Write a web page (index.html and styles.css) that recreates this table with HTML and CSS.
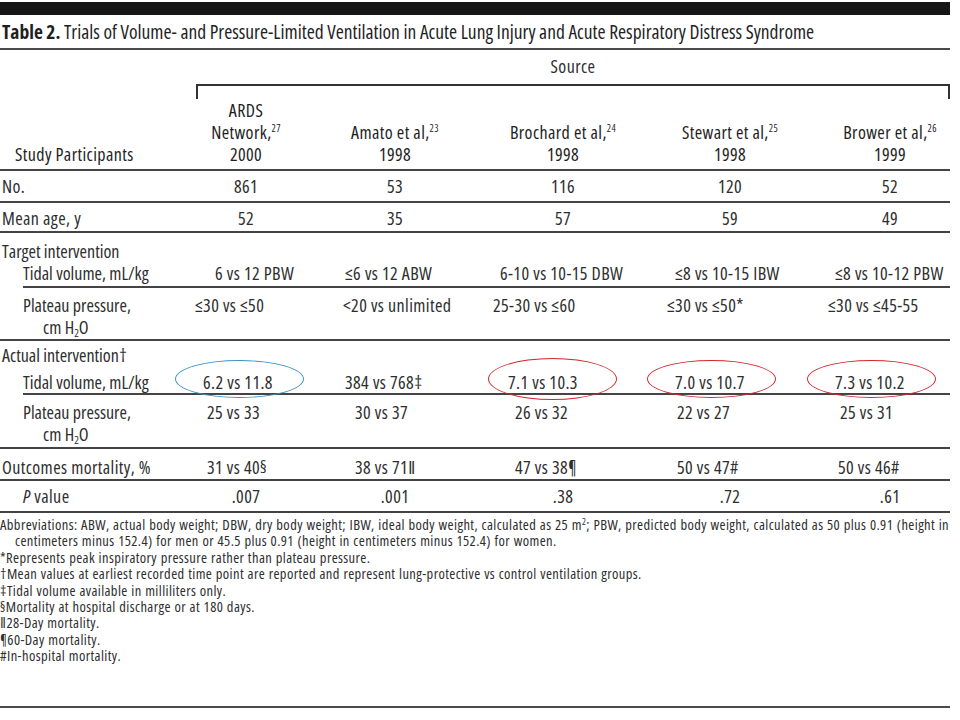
FILE: index.html
```html
<!DOCTYPE html>
<html lang="en">
<head>
<meta charset="utf-8">
<title>Table 2</title>
<link rel="stylesheet" href="styles.css">
</head>
<body>
<div class="page">
  <div class="bar"></div>
  <div class="title"><b>Table 2.</b> Trials of Volume- and Pressure-Limited Ventilation in Acute Lung Injury and Acute Respiratory Distress Syndrome</div>

  <div class="spanner">
    <div class="source">Source</div>
    <div class="bracket"></div>
  </div>

  <div class="row head">
    <div class="lab">Study Participants</div>
    <div>ARDS<br>Network,<sup>27</sup><br>2000</div>
    <div>Amato et al,<sup>23</sup><br>1998</div>
    <div>Brochard et al,<sup>24</sup><br>1998</div>
    <div>Stewart et al,<sup>25</sup><br>1998</div>
    <div class="last">Brower et al,<sup>26</sup><br>1999</div>
  </div>

  <div class="row cen r-no">
    <div class="lab">No.</div>
    <div>861</div><div>53</div><div>116</div><div>120</div><div class="last">52</div>
  </div>

  <div class="row cen r-age">
    <div class="lab">Mean age, y</div>
    <div>52</div><div>35</div><div>57</div><div>59</div><div class="last">49</div>
  </div>

  <div class="group g-target">
    <div class="glabel">Target intervention</div>
    <div class="row sub r-tt">
      <div class="lab">Tidal volume, mL/kg</div>
      <div>6 vs 12 PBW</div><div>≤6 vs 12 ABW</div><div>6-10 vs 10-15 DBW</div><div>≤8 vs 10-15 IBW</div><div>≤8 vs 10-12 PBW</div>
    </div>
    <div class="row sub end r-tp">
      <div class="lab">Plateau pressure,<br><span class="unit">cm H<sub>2</sub>O</span></div>
      <div>≤30 vs ≤50</div><div>&lt;20 vs unlimited</div><div>25-30 vs ≤60</div><div>≤30 vs ≤50*</div><div>≤30 vs ≤45-55</div>
    </div>
  </div>

  <div class="group g-actual">
    <div class="glabel">Actual intervention†</div>
    <div class="row sub r-at">
      <div class="lab">Tidal volume, mL/kg</div>
      <div><span class="ring blue">6.2 vs 11.8</span></div>
      <div>384 vs 768‡</div>
      <div><span class="ring red wide">7.1 vs 10.3</span></div>
      <div><span class="ring red">7.0 vs 10.7</span></div>
      <div><span class="ring red">7.3 vs 10.2</span></div>
    </div>
    <div class="row sub end r-ap">
      <div class="lab">Plateau pressure,<br><span class="unit">cm H<sub>2</sub>O</span></div>
      <div>25 vs 33</div><div>30 vs 37</div><div>26 vs 32</div><div>22 vs 27</div><div>25 vs 31</div>
    </div>
  </div>

  <div class="row r-out">
    <div class="lab">Outcomes mortality, %</div>
    <div>31 vs 40§</div><div>38 vs 71‖</div><div>47 vs 38¶</div><div>50 vs 47#</div><div>50 vs 46#</div>
  </div>

  <div class="row cen r-p">
    <div class="lab"><i>P</i> value</div>
    <div>.007</div><div>.001</div><div>.38</div><div>.72</div><div class="last">.61</div>
  </div>

  <div class="notes">
    <p class="hang">Abbreviations: ABW, actual body weight; DBW, dry body weight; IBW, ideal body weight, calculated as 25 m<sup>2</sup>; PBW, predicted body weight, calculated as 50 plus 0.91 (height in<br>centimeters minus 152.4) for men or 45.5 plus 0.91 (height in centimeters minus 152.4) for women.</p>
    <p>*Represents peak inspiratory pressure rather than plateau pressure.</p>
    <p>†Mean values at earliest recorded time point are reported and represent lung-protective vs control ventilation groups.</p>
    <p>‡Tidal volume available in milliliters only.</p>
    <p>§Mortality at hospital discharge or at 180 days.</p>
    <p>‖28-Day mortality.</p>
    <p>¶60-Day mortality.</p>
    <p>#In-hospital mortality.</p>
  </div>
</div>
</body>
</html>
```

FILE: styles.css
```css
html, body {
  margin: 0;
  padding: 0;
  background: #ffffff;
}

body {
  color: #2e2e2e;
  font-family: "Open Sans", "Liberation Sans", Arial, sans-serif;
  font-stretch: condensed;
}

.page {
  width: 950px;
}

.bar {
  height: 13px;
  margin-top: 2px;
  background: #161616;
}

.title {
  height: 33px;
  line-height: 33px;
  padding-left: 2px;
  font-size: 19.5px;
  color: #1f1f1f;
  white-space: nowrap;
  border-bottom: 2px solid #4a4a4a;
}

.title b {
  font-weight: 700;
}

.spanner {
  margin-left: 196px;
}

.source {
  text-align: center;
  font-size: 18px;
  line-height: 22px;
  letter-spacing: 0.4px;
  padding-top: 5px;
}

.bracket {
  box-sizing: border-box;
  margin-top: 7px;
  height: 15px;
  border: 2px solid #333333;
  border-bottom: none;
}

.row {
  display: grid;
  grid-template-columns: 172px 148px 150px 186px 148px 146px;
  font-size: 18px;
  line-height: 22px;
  letter-spacing: 0.4px;
  border-bottom: 2px solid #444444;
}

.row.sub {
  margin-left: 23px;
  grid-template-columns: 149px 148px 150px 186px 148px 146px;
}

.row.sub.end {
  border-bottom: none;
}

.row > div {
  white-space: nowrap;
}

.lab {
  padding-left: 2px;
  text-align: left;
}

.row.sub .lab {
  padding-left: 0;
  letter-spacing: 0;
}

.unit {
  padding-left: 20px;
}

sub {
  font-size: 11px;
  line-height: 0;
  vertical-align: -3px;
}

sup {
  font-size: 10px;
  line-height: 0;
  vertical-align: 7px;
}

/* header */
.head {
  align-items: end;
  text-align: center;
  padding-bottom: 4px;
  color: #1e1e1e;
}

.head .lab {
  padding-left: 15px;
}

.head .last,
.cen .last {
  padding-left: 26px;
}

.cen {
  text-align: center;
}

.cen .lab {
  text-align: left;
}

.r-no {
  padding: 4px 0 4px;
}

.r-age {
  padding: 4px 0 2px;
}

.r-p {
  padding: 4px 0 4px;
}

.r-p .lab {
  padding-left: 23px;
}

.r-out {
  padding: 7px 0 1px;
}

/* groups */
.group {
  border-bottom: 2px solid #444444;
}

.glabel {
  font-size: 18px;
  line-height: 22px;
  padding-left: 2px;
}

.g-target {
  padding: 7px 0 1px;
}

.g-target .r-tt {
  padding-bottom: 2px;
}

.g-target .r-tp {
  padding-top: 6px;
}

.g-actual {
  padding: 3px 0 2px;
}

.g-actual .r-at {
  margin-top: 5px;
}

.g-actual .r-ap {
  padding-top: 6px;
}

/* per-column starting offsets of left-set values */
.r-tt > :nth-child(2) { padding-left: 43px; }
.r-tt > :nth-child(3) { padding-left: 25px; }
.r-tt > :nth-child(4) { padding-left: 30px; }
.r-tt > :nth-child(5) { padding-left: 19px; }
.r-tt > :nth-child(6) { padding-left: 31px; }

.r-tp > :nth-child(2) { padding-left: 23px; }
.r-tp > :nth-child(3) { padding-left: 23px; }
.r-tp > :nth-child(4) { padding-left: 23px; }
.r-tp > :nth-child(5) { padding-left: 11px; }
.r-tp > :nth-child(6) { padding-left: 24px; }

.r-at > :nth-child(2) { padding-left: 31px; }
.r-at > :nth-child(3) { padding-left: 25px; }
.r-at > :nth-child(4) { padding-left: 38px; }
.r-at > :nth-child(5) { padding-left: 19px; }
.r-at > :nth-child(6) { padding-left: 31px; }

.r-ap > :nth-child(2) { padding-left: 35px; }
.r-ap > :nth-child(3) { padding-left: 35px; }
.r-ap > :nth-child(4) { padding-left: 45px; }
.r-ap > :nth-child(5) { padding-left: 21px; }
.r-ap > :nth-child(6) { padding-left: 36px; }

.r-out > :nth-child(2) { padding-left: 35px; }
.r-out > :nth-child(3) { padding-left: 35px; }
.r-out > :nth-child(4) { padding-left: 45px; }
.r-out > :nth-child(5) { padding-left: 21px; }
.r-out > :nth-child(6) { padding-left: 34px; }

/* hand-drawn ellipses */
.ring {
  position: relative;
  display: inline-block;
}

.ring::after {
  content: "";
  position: absolute;
  left: -28px;
  top: -11px;
  width: 129px;
  height: 38px;
  box-sizing: border-box;
  border: 1.4px solid;
  border-radius: 50%;
}

.ring.blue::after {
  border-color: #3a92c4;
}

.ring.red::after {
  border-color: #d4262c;
}

.ring.wide::after {
  left: -20px;
  top: -13px;
  height: 42px;
}

/* footnotes */
.notes {
  height: 189px;
  padding-top: 4px;
  font-size: 14.5px;
  letter-spacing: 0.4px;
  word-spacing: 0.5px;
  line-height: 16.4px;
  border-bottom: 2px solid #4a4a4a;
}

.notes p {
  margin: 0;
  white-space: nowrap;
}

.notes sup {
  font-size: 9px;
  vertical-align: 5px;
}

.notes .hang {
  padding-left: 15px;
  text-indent: -15px;
}
```
